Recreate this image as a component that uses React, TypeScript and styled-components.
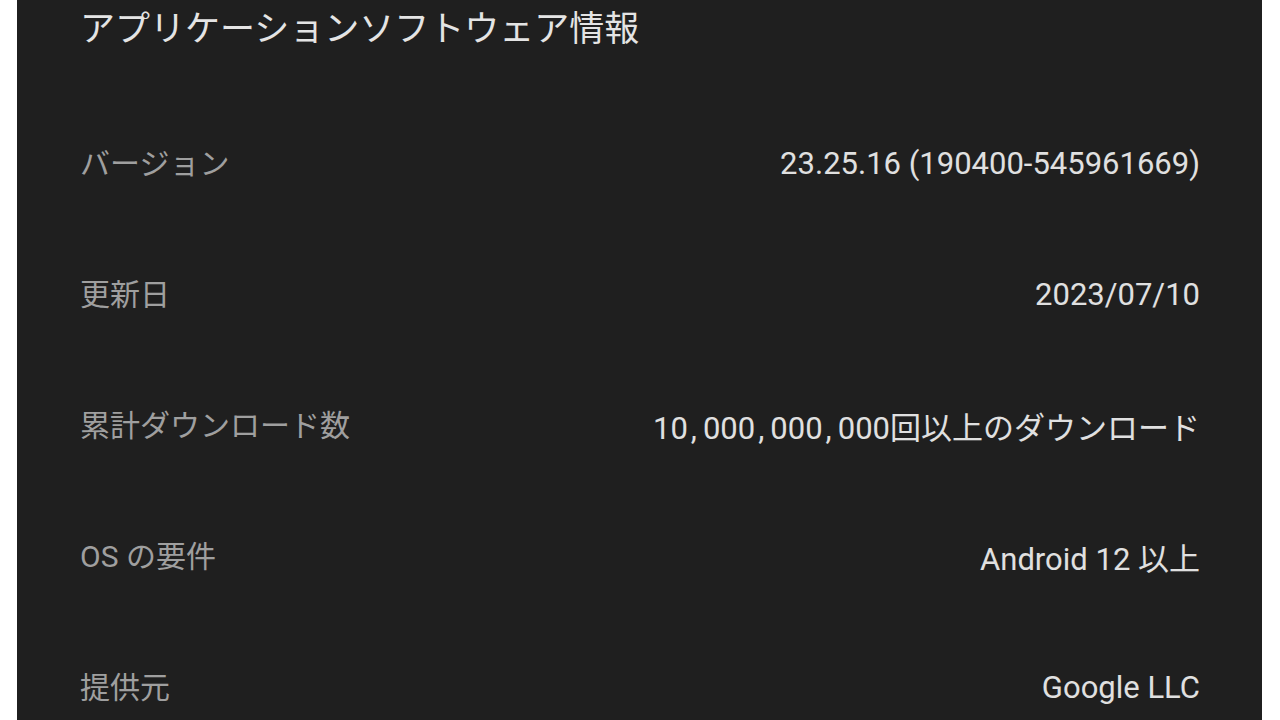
import React from "react";
import styled, { createGlobalStyle } from "styled-components";

const Global = createGlobalStyle`
  html, body { margin: 0; padding: 0; background: #ffffff; overflow: hidden; }
  body { font-family: Roboto, "Noto Sans CJK JP", sans-serif; }
`;

const Page = styled.div`
  display: flex;
  height: 720px;
  padding: 0 18px 0 17px;
  box-sizing: border-box;
`;

const Panel = styled.section`
  flex: 1;
  background: #1f1f1f;
  padding: 0 62px 0 63px;
  overflow: hidden;
`;

const Title = styled.h1`
  margin: 0;
  height: 60px;
  line-height: 60px;
  font-size: 35px;
  font-weight: 400;
  color: #e4e4e4;
  white-space: nowrap;
`;

const List = styled.dl`
  margin: 0;
  padding-top: 35px;
`;

const Row = styled.div`
  display: flex;
  align-items: center;
  justify-content: space-between;
  height: 131px;
  white-space: nowrap;
`;

const Label = styled.dt`
  font-size: 30px;
  color: #9f9f9f;
`;

const Value = styled.dd`
  margin: 0;
  padding-top: 5px;
  font-size: 31px;
  color: #e0e0e0;
  text-align: right;
`;

const Comma = styled.span`
  margin: 0 6px 0 3px;
`;

function withWideCommas(text: string) {
  const parts = text.split(",");
  return parts.map((p, i) => (
    <React.Fragment key={i}>
      {p}
      {i < parts.length - 1 && <Comma>,</Comma>}
    </React.Fragment>
  ));
}

const rows: [string, string][] = [
  ["バージョン", "23.25.16 (190400-545961669)"],
  ["更新日", "2023/07/10"],
  ["累計ダウンロード数", "10,000,000,000回以上のダウンロード"],
  ["OS の要件", "Android 12 以上"],
  ["提供元", "Google LLC"],
];

export default function App() {
  return (
    <>
      <Global />
      <Page>
        <Panel>
          <Title>アプリケーションソフトウェア情報</Title>
          <List>
            {rows.map(([k, v]) => (
              <Row key={k}>
                <Label>{k}</Label>
                <Value>{withWideCommas(v)}</Value>
              </Row>
            ))}
          </List>
        </Panel>
      </Page>
    </>
  );
}
